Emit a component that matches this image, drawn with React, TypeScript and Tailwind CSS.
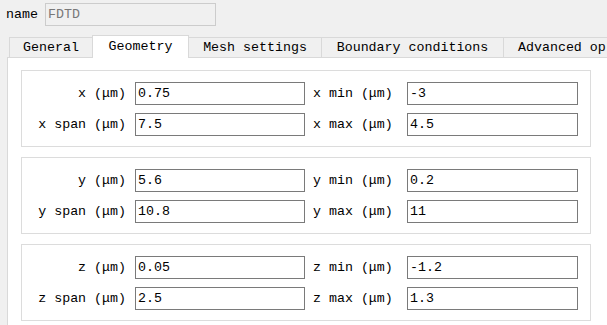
const GROUPS = [
    { axis: 'x', center: '0.75', span: '7.5', min: '-3', max: '4.5' },
    { axis: 'y', center: '5.6', span: '10.8', min: '0.2', max: '11' },
    { axis: 'z', center: '0.05', span: '2.5', min: '-1.2', max: '1.3' },
];

const TABS = [
    { label: 'General', cls: 'w-[83px] h-[20px] border-l border-t' },
    { label: 'Geometry', cls: 'w-[97px] h-[23px] border-l border-t border-r bg-white -mb-px relative z-10', active: true },
    { label: 'Mesh settings', cls: 'w-[133px] h-[20px] border-t border-r' },
    { label: 'Boundary conditions', cls: 'w-[182px] h-[20px] border-t border-r' },
];

function Field({ value }: { value: string }) {
    return (
        <div className="h-[23px] border border-[#7a7a7a] bg-white flex items-center pl-[2px] text-black whitespace-nowrap overflow-hidden">
            {value}
        </div>
    );
}

function Group({ g }: { g: (typeof GROUPS)[number] }) {
    const rows = [
        [`${g.axis} (μm)`, g.center, `${g.axis} min (μm)`, g.min],
        [`${g.axis} span (μm)`, g.span, `${g.axis} max (μm)`, g.max],
    ];
    return (
        <div className="w-[570px] border border-[#dcdcdc] pt-[11px] pb-[10px] flex flex-col gap-[8px]">
            {rows.map((r) => (
                <div key={r[0]} className="grid grid-cols-[104px_9px_170px_102px_171px] items-center">
                    <span className="text-right whitespace-nowrap">{r[0]}</span>
                    <span />
                    <Field value={r[1]} />
                    <span className="pl-[8px] whitespace-nowrap">{r[2]}</span>
                    <Field value={r[3]} />
                </div>
            ))}
        </div>
    );
}

export default function App() {
    return (
        <div className="w-[607px] h-[325px] bg-[#f0f0f0] overflow-hidden flex flex-col font-['Liberation_Mono',monospace] text-[13.3px] text-black">
            <div className="flex items-center mt-[3px] pl-[6px] h-[23px]">
                <span className="w-[39px]">name</span>
                <div className="w-[171px] h-[23px] border border-[#cccccc] bg-[#f0f0f0] flex items-center pl-[2px] text-[#787878]">
                    FDTD
                </div>
            </div>

            <div className="flex items-end pl-[9px] mt-[9px] h-[22px]">
                {TABS.map((t) => (
                    <div key={t.label} className={`${t.cls} border-[#d9d9d9] flex items-center justify-center whitespace-nowrap`}>
                        {t.label}
                    </div>
                ))}
                {/* last tab runs past the window edge */}
                <div className="flex-1 h-[20px] border-t border-[#d9d9d9] flex items-center pl-[14px] whitespace-nowrap overflow-hidden">
                    Advanced op
                </div>
            </div>

            <div className="flex-1 ml-[7px] border-l border-t border-[#d9d9d9] bg-white pt-[12px] pl-[13px] flex flex-col gap-[10px]">
                {GROUPS.map((g) => (
                    <Group key={g.axis} g={g} />
                ))}
            </div>
        </div>
    );
}
